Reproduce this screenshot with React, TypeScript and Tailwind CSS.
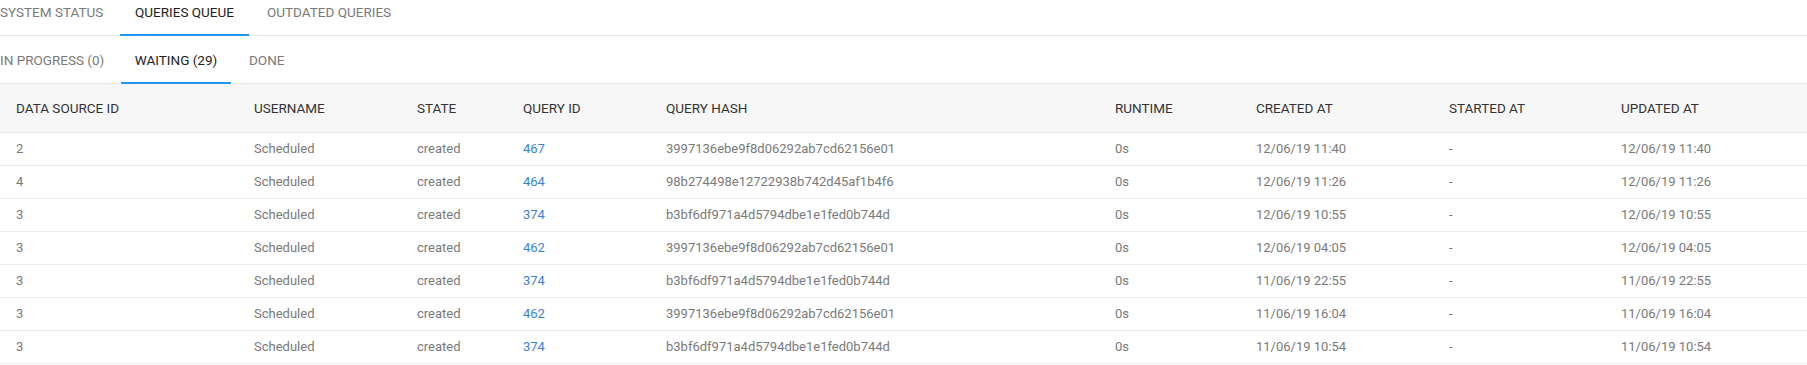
const topTabs = [
  { label: 'System Status', active: false, width: 'w-[136px] pl-4' },
  { label: 'Queries Queue', active: true, width: 'w-[129px] justify-center' },
  { label: 'Outdated Queries', active: false, width: 'w-[157px] pl-[18px]' },
]

const subTabs = [
  { label: 'In Progress (0)', active: false, width: 'w-[137px] pl-4' },
  { label: 'Waiting (29)', active: true, width: 'w-[110px] justify-center' },
  { label: 'Done', active: false, width: 'w-[70px] pl-[18px]' },
]

const columns = [
  'Data Source ID',
  'Username',
  'State',
  'Query ID',
  'Query Hash',
  'Runtime',
  'Created At',
  'Started At',
  'Updated At',
]

const rows = [
  ['2', '467', '3997136ebe9f8d06292ab7cd62156e01', '12/06/19 11:40'],
  ['4', '464', '98b274498e12722938b742d45af1b4f6', '12/06/19 11:26'],
  ['3', '374', 'b3bf6df971a4d5794dbe1e1fed0b744d', '12/06/19 10:55'],
  ['3', '462', '3997136ebe9f8d06292ab7cd62156e01', '12/06/19 04:05'],
  ['3', '374', 'b3bf6df971a4d5794dbe1e1fed0b744d', '11/06/19 22:55'],
  ['3', '462', '3997136ebe9f8d06292ab7cd62156e01', '11/06/19 16:04'],
  ['3', '374', 'b3bf6df971a4d5794dbe1e1fed0b744d', '11/06/19 10:54'],
]

const grid = 'grid grid-cols-[238px_163px_106px_143px_449px_141px_193px_172px_1fr] items-center'

function TabBar({ tabs }: { tabs: { label: string; active: boolean; width: string }[] }) {
  return (
    <div className="h-12 flex shadow-[inset_0_-1px_0_#e8e8e8]">
      <div className="flex -ml-4">
        {tabs.map(tab => (
          <div
            key={tab.label}
            className={
              tab.active
                ? `${tab.width} h-12 flex items-center text-[13.5px] uppercase whitespace-nowrap text-[#222] shadow-[inset_0_-2px_0_#2196f3]`
                : `${tab.width} h-12 flex items-center text-[13.5px] uppercase whitespace-nowrap text-[#7a7a7a]`
            }
          >
            {tab.label}
          </div>
        ))}
      </div>
    </div>
  )
}

export default function App() {
  return (
    <div className="w-[1807px] h-[365px] overflow-hidden bg-white font-['Roboto',sans-serif]">
      <div className="-mt-3">
        <TabBar tabs={topTabs} />
        <TabBar tabs={subTabs} />

        <div className={`${grid} h-[49px] bg-[#f7f7f7] border-b border-[#e8e8e8]`}>
          {columns.map(col => (
            <div key={col} className="pl-4 text-[13.5px] uppercase text-[#333] whitespace-nowrap">
              {col}
            </div>
          ))}
        </div>

        {rows.map(([dsId, queryId, hash, date], i) => (
          <div key={i} className={`${grid} h-[33px] border-b border-[#ebebeb] text-[13px] text-[#7a7a7a]`}>
            <div className="pl-4">{dsId}</div>
            <div className="pl-4">Scheduled</div>
            <div className="pl-4">created</div>
            <div className="pl-4">
              <a href="#" className="text-[#3b82d6]">{queryId}</a>
            </div>
            <div className="pl-4">{hash}</div>
            <div className="pl-4">0s</div>
            <div className="pl-4">{date}</div>
            <div className="pl-4">-</div>
            <div className="pl-4">{date}</div>
          </div>
        ))}
      </div>
    </div>
  )
}
